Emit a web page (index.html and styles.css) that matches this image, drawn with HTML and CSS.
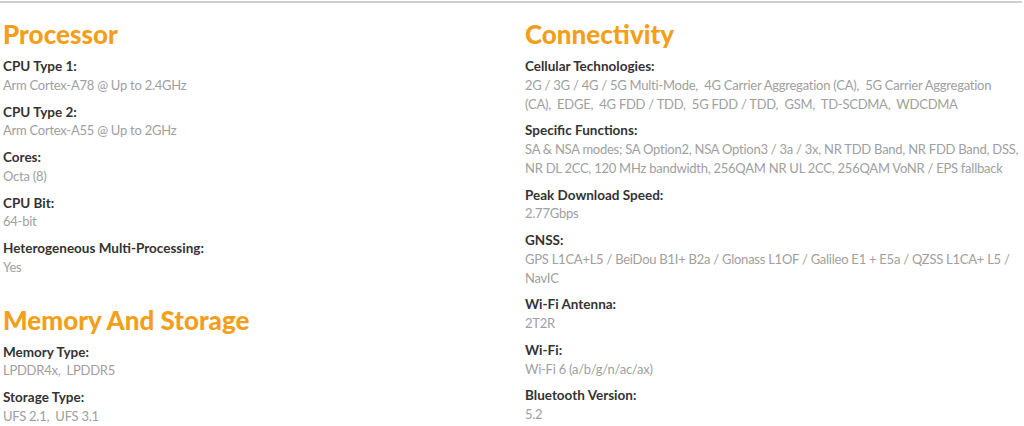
FILE: index.html
```html
<!DOCTYPE html>
<html lang="en">
<head>
    <meta charset="UTF-8">
    <title>Specifications</title>
    <link rel="stylesheet" href="styles.css">
</head>
<body>
    <div class="rule"></div>
    <div class="specs">
        <div class="column">
            <div class="group">
                <h2>Processor</h2>
                <div class="spec">
                    <div class="label">CPU Type 1:</div>
                    <div class="value">Arm Cortex-A78 @ Up to 2.4GHz</div>
                </div>
                <div class="spec">
                    <div class="label">CPU Type 2:</div>
                    <div class="value">Arm Cortex-A55 @ Up to 2GHz</div>
                </div>
                <div class="spec">
                    <div class="label">Cores:</div>
                    <div class="value">Octa (8)</div>
                </div>
                <div class="spec">
                    <div class="label">CPU Bit:</div>
                    <div class="value">64-bit</div>
                </div>
                <div class="spec">
                    <div class="label">Heterogeneous Multi-Processing:</div>
                    <div class="value">Yes</div>
                </div>
            </div>
            <div class="group">
                <h2>Memory And Storage</h2>
                <div class="spec">
                    <div class="label">Memory Type:</div>
                    <div class="value">LPDDR4x,&nbsp; LPDDR5</div>
                </div>
                <div class="spec">
                    <div class="label">Storage Type:</div>
                    <div class="value">UFS 2.1,&nbsp; UFS 3.1</div>
                </div>
            </div>
        </div>
        <div class="column">
            <div class="group">
                <h2>Connectivity</h2>
                <div class="spec">
                    <div class="label">Cellular Technologies:</div>
                    <div class="value">2G / 3G / 4G / 5G Multi-Mode,&nbsp; 4G Carrier Aggregation (CA),&nbsp; 5G Carrier Aggregation (CA),&nbsp; EDGE,&nbsp; 4G FDD / TDD,&nbsp; 5G FDD / TDD,&nbsp; GSM,&nbsp; TD-SCDMA,&nbsp; WDCDMA</div>
                </div>
                <div class="spec">
                    <div class="label">Specific Functions:</div>
                    <div class="value">SA &amp; NSA modes; SA Option2, NSA Option3 / 3a / 3x, NR TDD Band, NR FDD Band, DSS, NR DL 2CC, 120 MHz bandwidth, 256QAM NR UL 2CC, 256QAM VoNR / EPS fallback</div>
                </div>
                <div class="spec">
                    <div class="label">Peak Download Speed:</div>
                    <div class="value">2.77Gbps</div>
                </div>
                <div class="spec">
                    <div class="label">GNSS:</div>
                    <div class="value">GPS L1CA+L5 / BeiDou B1I+ B2a / Glonass L1OF / Galileo E1 + E5a / QZSS L1CA+ L5 / NavIC</div>
                </div>
                <div class="spec">
                    <div class="label">Wi-Fi Antenna:</div>
                    <div class="value">2T2R</div>
                </div>
                <div class="spec">
                    <div class="label">Wi-Fi:</div>
                    <div class="value">Wi-Fi 6 (a/b/g/n/ac/ax)</div>
                </div>
                <div class="spec">
                    <div class="label">Bluetooth Version:</div>
                    <div class="value">5.2</div>
                </div>
            </div>
        </div>
    </div>
</body>
</html>
```

FILE: styles.css
```css
body {
    margin: 0;
    background: #fff;
    font-family: Lato, Arial, sans-serif;
}

.rule {
    height: 2px;
    margin: 1px 2px 0 0;
    background: #cfcfcf;
}

.specs {
    display: grid;
    grid-template-columns: 522px 1fr;
    padding: 0 4px 0 3px;
}

.group {
    margin-bottom: 27px;
}

.group:last-child {
    margin-bottom: 0;
}

h2 {
    margin: 15px 0 7px;
    font-size: 26px;
    line-height: 32px;
    font-weight: 900;
    color: #f39f1b;
}

.spec {
    margin-bottom: 8px;
    font-size: 13px;
    line-height: 18.75px;
}

.spec:last-child {
    margin-bottom: 0;
}

.label {
    font-size: 13.5px;
    font-weight: bold;
    color: #333;
}

.value {
    color: #a0a0a0;
    letter-spacing: -0.25px;
}
```
